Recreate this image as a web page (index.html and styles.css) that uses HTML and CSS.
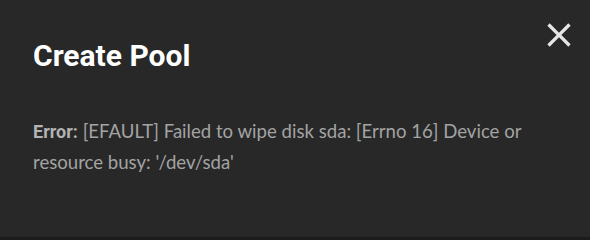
FILE: index.html
```html
<!DOCTYPE html>
<html>
<head>
<meta charset="utf-8">
<link rel="stylesheet" href="styles.css">
</head>
<body>
<div class="dialog">
  <div class="header">
    <h1 class="title">Create Pool</h1>
    <button class="close" aria-label="Close">
      <svg width="24" height="24" viewBox="0 0 24 24"><path d="M19 6.41 17.59 5 12 10.59 6.41 5 5 6.41 10.59 12 5 17.59 6.41 19 12 13.41 17.59 19 19 17.59 13.41 12z" fill="currentColor"/></svg>
    </button>
  </div>
  <p class="message"><b class="label">Error:</b> [EFAULT] Failed to wipe disk sda: [Errno 16] Device or resource busy: '/dev/sda'</p>
</div>
</body>
</html>
```
FILE: styles.css
```css
html, body {
  margin: 0;
  padding: 0;
  background: #1b1b1b;
}
.dialog {
  width: 590px;
  height: 237px;
  box-sizing: border-box;
  background: #282828;
  padding: 0 33px;
}
.header {
  display: flex;
  justify-content: space-between;
  align-items: flex-start;
}
.title {
  margin: 40px 0 0;
  font-family: Roboto, sans-serif;
  font-weight: 700;
  font-size: 30px;
  line-height: 32px;
  color: #ffffff;
}
.close {
  margin: 20px -17px 0 0;
  padding: 0;
  border: 0;
  background: none;
  color: #e6e6e6;
  width: 30px;
  height: 30px;
  display: flex;
  align-items: center;
  justify-content: center;
}
.close svg {
  width: 40px;
  height: 40px;
  flex: none;
}
.message {
  margin: 44px 0 0;
  font-family: Lato, sans-serif;
  font-size: 18.6px;
  line-height: 30px;
  color: #a3a3a3;
  max-width: 520px;
}
.label {
  font-family: Roboto, sans-serif;
  font-weight: 700;
  font-size: 18px;
  color: #b3b3b3;
}
```
